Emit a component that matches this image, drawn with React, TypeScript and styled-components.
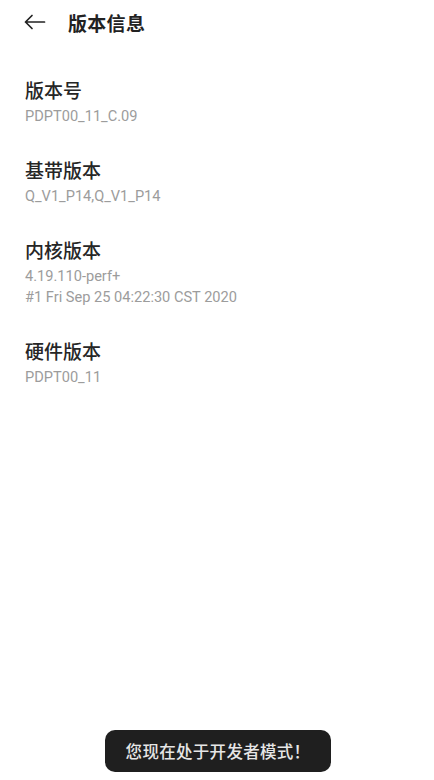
import styled, { createGlobalStyle } from "styled-components";

const GlobalStyle = createGlobalStyle`
  html, body {
    margin: 0;
    padding: 0;
    background: #ffffff;
  }
  body {
    font-family: Roboto, "Noto Sans CJK SC", sans-serif;
  }
`;

type VersionItem = {
  title: string;
  lines: string[];
};

const items: VersionItem[] = [
  { title: "版本号", lines: ["PDPT00_11_C.09"] },
  { title: "基带版本", lines: ["Q_V1_P14,Q_V1_P14"] },
  { title: "内核版本", lines: ["4.19.110-perf+", "#1 Fri Sep 25 04:22:30 CST 2020"] },
  { title: "硬件版本", lines: ["PDPT00_11"] },
];

const BackArrow = () => (
  <svg width="22" height="16" viewBox="0 0 22 16" fill="none">
    <path
      d="M20.5 8H1.5M8 1.5L1.5 8L8 14.5"
      stroke="#222"
      strokeWidth="1.7"
      strokeLinecap="round"
      strokeLinejoin="round"
    />
  </svg>
);

const App = () => {
  return (
    <Page>
      <GlobalStyle />
      <Header>
        <BackButton>
          <BackArrow />
        </BackButton>
        <HeaderTitle>版本信息</HeaderTitle>
      </Header>
      <List>
        {items.map((item) => (
          <Item key={item.title}>
            <ItemTitle>{item.title}</ItemTitle>
            {item.lines.map((line) => (
              <ItemSub key={line}>{line}</ItemSub>
            ))}
          </Item>
        ))}
      </List>
      <Toast>您现在处于开发者模式！</Toast>
    </Page>
  );
};

export default App;

const Page = styled.div`
  position: relative;
  width: 434px;
  height: 780px;
  padding: 0 25px;
  box-sizing: border-box;
  overflow: hidden;
`;

const Header = styled.div`
  height: 44px;
  display: flex;
  align-items: center;
  gap: 22px;
`;

const BackButton = styled.div`
  width: 22px;
  height: 16px;
  display: flex;
  align-items: center;
  margin-left: -1px;
`;

const HeaderTitle = styled.div`
  font-family: "Noto Sans CJK SC", sans-serif;
  font-size: 19px;
  font-weight: 700;
  color: #222;
  letter-spacing: 0.3px;
`;

const List = styled.div`
  display: flex;
  flex-direction: column;
  padding-top: 33px;
`;

const Item = styled.div`
  display: flex;
  flex-direction: column;
  padding-bottom: 30px;
`;

const ItemTitle = styled.div`
  font-family: "Noto Sans CJK SC", sans-serif;
  font-size: 19px;
  font-weight: 500;
  line-height: 26px;
  color: #262626;
  margin-bottom: 3px;
`;

const ItemSub = styled.div`
  font-family: Roboto, sans-serif;
  font-size: 14.6px;
  line-height: 21px;
  color: #9c9c9c;
`;

const Toast = styled.div`
  position: absolute;
  left: 105px;
  bottom: 8px;
  width: 226px;
  height: 42px;
  box-sizing: border-box;
  border-radius: 10px;
  background: #1f1f1f;
  color: #e6e6e6;
  font-family: "Noto Sans CJK SC", sans-serif;
  font-size: 16.5px;
  font-weight: 500;
  display: flex;
  align-items: center;
  justify-content: center;
  letter-spacing: 0.3px;
`;
